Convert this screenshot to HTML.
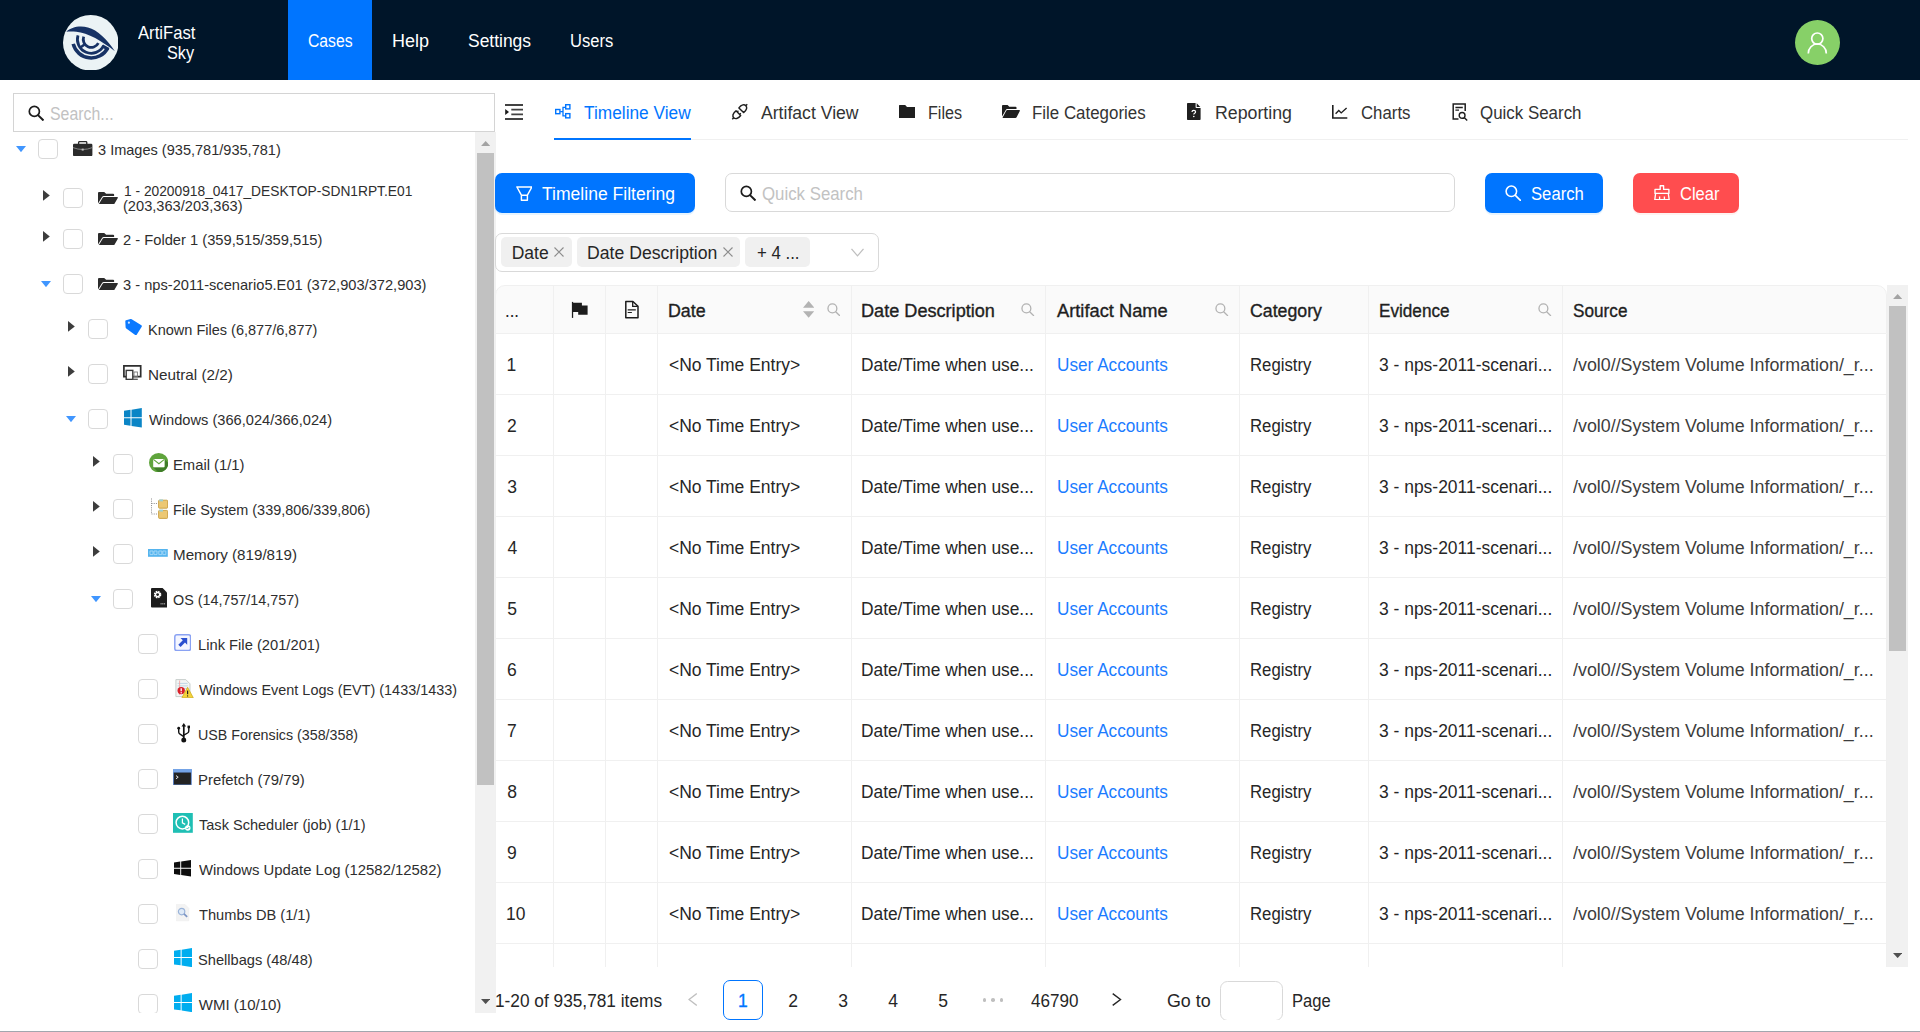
<!DOCTYPE html>
<html><head><meta charset="utf-8"><title>ArtiFast Sky</title>
<style>
html,body{margin:0;padding:0;background:#fff;}
body{width:1920px;height:1032px;overflow:hidden;position:relative;font-family:"Liberation Sans",sans-serif;}
.t{position:absolute;white-space:pre;line-height:normal;transform-origin:0 0;}
#root{position:absolute;left:0;top:0;width:1920px;height:1032px;overflow:hidden;}
</style></head><body><div id="root">
<div class="" style="position:absolute;left:0px;top:0px;width:1920px;height:80px;background:#001529;"></div>
<div class="" style="position:absolute;left:288px;top:0px;width:84px;height:80px;background:#0075ff;"></div>
<svg style="position:absolute;left:62.8px;top:14.6px;" width="55.5" height="55.5" viewBox="0 0 100 100" preserveAspectRatio="none">
<circle cx="50" cy="50" r="50" fill="#ebf3f5"/>
<path d="M6 30.4 C14 22 30 18.5 45 22.5 C62 27 80 44 93.5 65.4 C82 56.5 70 48 58 41.5 C46 35.5 34 31.5 24 30.4 C16 29.6 10 30 6 30.4 Z" fill="#163265"/>
<path d="M37.3 39.0 A14.5 14.5 0 0 0 63.7 50.8" fill="none" stroke="#163265" stroke-width="5"/>
<path d="M27.0 36.7 A25 25 0 0 0 73.2 55.3" fill="none" stroke="#163265" stroke-width="5"/>
<path d="M18.4 52.1 A33.5 33.5 0 0 0 80.7 59.2" fill="none" stroke="#163265" stroke-width="6.4"/>
<path d="M40.5 51.8 L30.1 59.6" stroke="#163265" stroke-width="4.5"/>
<path d="M70.8 55.5 L82.1 62.0" stroke="#163265" stroke-width="5.5"/>
</svg>
<span class="t " style="left:138.27px;top:22.81px;font-size:17.8px;color:#fff;transform:scaleX(0.9369);">ArtiFast</span>
<span class="t " style="left:167.47px;top:42.81px;font-size:17.8px;color:#fff;transform:scaleX(0.9155);">Sky</span>
<span class="t " style="left:308.21px;top:30.78px;font-size:17.5px;color:#fff;transform:scaleX(0.8983);">Cases</span>
<span class="t " style="left:391.92px;top:30.78px;font-size:17.5px;color:#fff;transform:scaleX(1.0282);">Help</span>
<span class="t " style="left:467.92px;top:30.78px;font-size:17.5px;color:#fff;transform:scaleX(0.9966);">Settings</span>
<span class="t " style="left:570.03px;top:30.78px;font-size:17.5px;color:#fff;transform:scaleX(0.9448);">Users</span>
<svg style="position:absolute;left:1795px;top:20px;" width="45" height="45" viewBox="0 0 45 45" preserveAspectRatio="none">
<circle cx="22.5" cy="22.5" r="22.5" fill="#87d068"/>
<circle cx="22.3" cy="18.6" r="5.6" fill="none" stroke="#fff" stroke-width="1.7"/>
<path d="M13.3 33.4 A9 9.4 0 0 1 31.3 33.4" fill="none" stroke="#fff" stroke-width="1.7"/>
</svg>
<div class="" style="position:absolute;left:13px;top:93px;width:480px;height:37px;border:1px solid #d4d4d4;background:#fff;"></div>
<svg style="position:absolute;left:27.5px;top:104.5px;" width="16" height="16" viewBox="0 0 16 16" preserveAspectRatio="none"><circle cx="6.35" cy="6.4" r="5.05" fill="none" stroke="#1c1c1c" stroke-width="1.7"/><path d="M10 10.1 L15.5 15.5" stroke="#1c1c1c" stroke-width="2" stroke-linecap="butt"/></svg>
<span class="t " style="left:50.09px;top:103.88px;font-size:17.5px;color:#c2c2c2;transform:scaleX(0.9075);">Search...</span>
<div class="" style="position:absolute;left:475px;top:132px;width:21px;height:881px;background:#f1f1f1;"></div>
<div class="" style="position:absolute;left:477px;top:153px;width:17px;height:632px;background:#c1c1c1;"></div>
<svg style="position:absolute;left:480.9px;top:140.9px;" width="9.3" height="5.1" viewBox="0 0 11 6" preserveAspectRatio="none"><path d="M0 6 L5.5 0 L11 6 Z" fill="#a3a3a3"/></svg>
<svg style="position:absolute;left:480.9px;top:999px;" width="9.3" height="5.1" viewBox="0 0 11 6" preserveAspectRatio="none"><path d="M0 0 L5.5 6 L11 0 Z" fill="#505050"/></svg>
<div style="position:absolute;left:0;top:132px;width:475px;height:881px;overflow:hidden;"><div style="position:absolute;left:0;top:-132px;">
<svg style="position:absolute;left:15.899999999999999px;top:146.2px;" width="10" height="6.2" viewBox="0 0 10 6.2" preserveAspectRatio="none"><path d="M0 0 L10 0 L5 6.2 Z" fill="#4096ff"/></svg>
<div class="" style="position:absolute;left:38px;top:139px;width:18px;height:18px;border:1px solid #d9d9d9;border-radius:4px;background:#fff;"></div>
<span class="t " style="left:98.35px;top:141.28px;font-size:15.0px;color:#2e2e2e;transform:scaleX(0.9696);">3 Images (935,781/935,781)</span>
<svg style="position:absolute;left:42.900000000000006px;top:190.1px;" width="6.8" height="10.8" viewBox="0 0 6.8 10.8" preserveAspectRatio="none"><path d="M0 0 L6.8 5.4 L0 10.8 Z" fill="#3d3d3d"/></svg>
<div class="" style="position:absolute;left:63px;top:188px;width:18px;height:18px;border:1px solid #d9d9d9;border-radius:4px;background:#fff;"></div>
<span class="t " style="left:123.85px;top:182.38px;font-size:15.0px;color:#2e2e2e;transform:scaleX(0.9180);">1 - 20200918_0417_DESKTOP-SDN1RPT.E01</span>
<span class="t " style="left:122.59px;top:197.28px;font-size:15.0px;color:#2e2e2e;transform:scaleX(0.9749);">(203,363/203,363)</span>
<svg style="position:absolute;left:42.900000000000006px;top:231.1px;" width="6.8" height="10.8" viewBox="0 0 6.8 10.8" preserveAspectRatio="none"><path d="M0 0 L6.8 5.4 L0 10.8 Z" fill="#3d3d3d"/></svg>
<div class="" style="position:absolute;left:63px;top:229px;width:18px;height:18px;border:1px solid #d9d9d9;border-radius:4px;background:#fff;"></div>
<span class="t " style="left:122.96px;top:231.28px;font-size:15.0px;color:#2e2e2e;transform:scaleX(0.9802);">2 - Folder 1 (359,515/359,515)</span>
<svg style="position:absolute;left:40.900000000000006px;top:281.2px;" width="10" height="6.2" viewBox="0 0 10 6.2" preserveAspectRatio="none"><path d="M0 0 L10 0 L5 6.2 Z" fill="#4096ff"/></svg>
<div class="" style="position:absolute;left:63px;top:274px;width:18px;height:18px;border:1px solid #d9d9d9;border-radius:4px;background:#fff;"></div>
<span class="t " style="left:123.14px;top:276.29px;font-size:15.0px;color:#2e2e2e;transform:scaleX(0.9765);">3 - nps-2011-scenario5.E01 (372,903/372,903)</span>
<svg style="position:absolute;left:67.9px;top:321.1px;" width="6.8" height="10.8" viewBox="0 0 6.8 10.8" preserveAspectRatio="none"><path d="M0 0 L6.8 5.4 L0 10.8 Z" fill="#3d3d3d"/></svg>
<div class="" style="position:absolute;left:88px;top:319px;width:18px;height:18px;border:1px solid #d9d9d9;border-radius:4px;background:#fff;"></div>
<span class="t " style="left:147.71px;top:321.29px;font-size:15.0px;color:#2e2e2e;transform:scaleX(0.9674);">Known Files (6,877/6,877)</span>
<svg style="position:absolute;left:67.9px;top:366.1px;" width="6.8" height="10.8" viewBox="0 0 6.8 10.8" preserveAspectRatio="none"><path d="M0 0 L6.8 5.4 L0 10.8 Z" fill="#3d3d3d"/></svg>
<div class="" style="position:absolute;left:88px;top:364px;width:18px;height:18px;border:1px solid #d9d9d9;border-radius:4px;background:#fff;"></div>
<span class="t " style="left:147.65px;top:366.29px;font-size:15.0px;color:#2e2e2e;transform:scaleX(1.0183);">Neutral (2/2)</span>
<svg style="position:absolute;left:65.9px;top:416.2px;" width="10" height="6.2" viewBox="0 0 10 6.2" preserveAspectRatio="none"><path d="M0 0 L10 0 L5 6.2 Z" fill="#4096ff"/></svg>
<div class="" style="position:absolute;left:88px;top:409px;width:18px;height:18px;border:1px solid #d9d9d9;border-radius:4px;background:#fff;"></div>
<span class="t " style="left:148.84px;top:411.29px;font-size:15.0px;color:#2e2e2e;transform:scaleX(0.9757);">Windows (366,024/366,024)</span>
<svg style="position:absolute;left:92.9px;top:456.1px;" width="6.8" height="10.8" viewBox="0 0 6.8 10.8" preserveAspectRatio="none"><path d="M0 0 L6.8 5.4 L0 10.8 Z" fill="#3d3d3d"/></svg>
<div class="" style="position:absolute;left:113px;top:454px;width:18px;height:18px;border:1px solid #d9d9d9;border-radius:4px;background:#fff;"></div>
<span class="t " style="left:172.69px;top:456.29px;font-size:15.0px;color:#2e2e2e;transform:scaleX(0.9863);">Email (1/1)</span>
<svg style="position:absolute;left:92.9px;top:501.1px;" width="6.8" height="10.8" viewBox="0 0 6.8 10.8" preserveAspectRatio="none"><path d="M0 0 L6.8 5.4 L0 10.8 Z" fill="#3d3d3d"/></svg>
<div class="" style="position:absolute;left:113px;top:499px;width:18px;height:18px;border:1px solid #d9d9d9;border-radius:4px;background:#fff;"></div>
<span class="t " style="left:172.72px;top:501.29px;font-size:15.0px;color:#2e2e2e;transform:scaleX(0.9613);">File System (339,806/339,806)</span>
<svg style="position:absolute;left:92.9px;top:546.1px;" width="6.8" height="10.8" viewBox="0 0 6.8 10.8" preserveAspectRatio="none"><path d="M0 0 L6.8 5.4 L0 10.8 Z" fill="#3d3d3d"/></svg>
<div class="" style="position:absolute;left:113px;top:544px;width:18px;height:18px;border:1px solid #d9d9d9;border-radius:4px;background:#fff;"></div>
<span class="t " style="left:172.66px;top:546.28px;font-size:15.0px;color:#2e2e2e;transform:scaleX(1.0117);">Memory (819/819)</span>
<svg style="position:absolute;left:90.9px;top:596.2px;" width="10" height="6.2" viewBox="0 0 10 6.2" preserveAspectRatio="none"><path d="M0 0 L10 0 L5 6.2 Z" fill="#4096ff"/></svg>
<div class="" style="position:absolute;left:113px;top:589px;width:18px;height:18px;border:1px solid #d9d9d9;border-radius:4px;background:#fff;"></div>
<span class="t " style="left:173.23px;top:591.28px;font-size:15.0px;color:#2e2e2e;transform:scaleX(0.9560);">OS (14,757/14,757)</span>
<div class="" style="position:absolute;left:138px;top:634px;width:18px;height:18px;border:1px solid #d9d9d9;border-radius:4px;background:#fff;"></div>
<span class="t " style="left:197.69px;top:636.28px;font-size:15.0px;color:#2e2e2e;transform:scaleX(0.9814);">Link File (201/201)</span>
<div class="" style="position:absolute;left:138px;top:679px;width:18px;height:18px;border:1px solid #d9d9d9;border-radius:4px;background:#fff;"></div>
<span class="t " style="left:198.84px;top:681.28px;font-size:15.0px;color:#2e2e2e;transform:scaleX(0.9612);">Windows Event Logs (EVT) (1433/1433)</span>
<div class="" style="position:absolute;left:138px;top:724px;width:18px;height:18px;border:1px solid #d9d9d9;border-radius:4px;background:#fff;"></div>
<span class="t " style="left:197.80px;top:726.28px;font-size:15.0px;color:#2e2e2e;transform:scaleX(0.9506);">USB Forensics (358/358)</span>
<div class="" style="position:absolute;left:138px;top:769px;width:18px;height:18px;border:1px solid #d9d9d9;border-radius:4px;background:#fff;"></div>
<span class="t " style="left:197.68px;top:771.28px;font-size:15.0px;color:#2e2e2e;transform:scaleX(0.9925);">Prefetch (79/79)</span>
<div class="" style="position:absolute;left:138px;top:814px;width:18px;height:18px;border:1px solid #d9d9d9;border-radius:4px;background:#fff;"></div>
<span class="t " style="left:198.58px;top:816.28px;font-size:15.0px;color:#2e2e2e;transform:scaleX(0.9696);">Task Scheduler (job) (1/1)</span>
<div class="" style="position:absolute;left:138px;top:859px;width:18px;height:18px;border:1px solid #d9d9d9;border-radius:4px;background:#fff;"></div>
<span class="t " style="left:198.84px;top:861.28px;font-size:15.0px;color:#2e2e2e;transform:scaleX(0.9920);">Windows Update Log (12582/12582)</span>
<div class="" style="position:absolute;left:138px;top:904px;width:18px;height:18px;border:1px solid #d9d9d9;border-radius:4px;background:#fff;"></div>
<span class="t " style="left:198.58px;top:906.28px;font-size:15.0px;color:#2e2e2e;transform:scaleX(0.9749);">Thumbs DB (1/1)</span>
<div class="" style="position:absolute;left:138px;top:949px;width:18px;height:18px;border:1px solid #d9d9d9;border-radius:4px;background:#fff;"></div>
<span class="t " style="left:198.24px;top:951.28px;font-size:15.0px;color:#2e2e2e;transform:scaleX(0.9753);">Shellbags (48/48)</span>
<div class="" style="position:absolute;left:138px;top:994px;width:18px;height:18px;border:1px solid #d9d9d9;border-radius:4px;background:#fff;"></div>
<span class="t " style="left:198.84px;top:996.28px;font-size:15.0px;color:#2e2e2e;">WMI (10/10)</span>
<svg style="position:absolute;left:73.2px;top:140.6px;" width="19.4" height="15.2" viewBox="0 0 19.4 15.2" preserveAspectRatio="none">
<path d="M5.6 3 V1.6 Q5.6 0.6 6.6 0.6 H12.8 Q13.8 0.6 13.8 1.6 V3" fill="none" stroke="#2b2b2b" stroke-width="1.3"/>
<rect x="0" y="2.7" width="19.4" height="12.5" rx="1.2" fill="#2b2b2b"/>
<path d="M0 6.6 Q9.7 10.4 19.4 6.6" fill="none" stroke="#9a9a9a" stroke-width="0.8"/>
<rect x="8.7" y="7.6" width="2" height="2" fill="#bdbdbd"/></svg>
<svg style="position:absolute;left:98px;top:191.6px;" width="20" height="12.8" viewBox="0 0 18 13" preserveAspectRatio="none">
<path d="M0.9 0 H5.6 L7.3 1.7 H13.6 Q14.5 1.7 14.5 2.6 V4 H5.2 Q4.2 4 3.8 4.9 L0 11.6 V0.9 Q0 0 0.9 0 Z" fill="#2b2b2b"/>
<path d="M5.3 5.1 H17.3 Q18.3 5.1 17.8 6 L14.6 12.3 Q14.2 13 13.4 13 H1.2 Q0.3 13 0.8 12.2 L4.2 5.8 Q4.6 5.1 5.3 5.1 Z" fill="#2b2b2b"/></svg>
<svg style="position:absolute;left:98px;top:232.6px;" width="20" height="12.8" viewBox="0 0 18 13" preserveAspectRatio="none">
<path d="M0.9 0 H5.6 L7.3 1.7 H13.6 Q14.5 1.7 14.5 2.6 V4 H5.2 Q4.2 4 3.8 4.9 L0 11.6 V0.9 Q0 0 0.9 0 Z" fill="#2b2b2b"/>
<path d="M5.3 5.1 H17.3 Q18.3 5.1 17.8 6 L14.6 12.3 Q14.2 13 13.4 13 H1.2 Q0.3 13 0.8 12.2 L4.2 5.8 Q4.6 5.1 5.3 5.1 Z" fill="#2b2b2b"/></svg>
<svg style="position:absolute;left:98px;top:277.6px;" width="20" height="12.8" viewBox="0 0 18 13" preserveAspectRatio="none">
<path d="M0.9 0 H5.6 L7.3 1.7 H13.6 Q14.5 1.7 14.5 2.6 V4 H5.2 Q4.2 4 3.8 4.9 L0 11.6 V0.9 Q0 0 0.9 0 Z" fill="#2b2b2b"/>
<path d="M5.3 5.1 H17.3 Q18.3 5.1 17.8 6 L14.6 12.3 Q14.2 13 13.4 13 H1.2 Q0.3 13 0.8 12.2 L4.2 5.8 Q4.6 5.1 5.3 5.1 Z" fill="#2b2b2b"/></svg>
<svg style="position:absolute;left:125px;top:319px;" width="17.2" height="16.4" viewBox="0 0 17.2 16.4" preserveAspectRatio="none">
<path d="M0.3 2.3 Q0.2 1.4 1.1 1.2 L5.6 0.1 Q6.4 -0.1 7.1 0.4 L16.4 6.2 Q17.3 6.8 16.7 7.7 L11.7 15.7 Q11.1 16.6 10.2 16 L1.3 9.4 Q0.7 9 0.6 8.2 Z" fill="#0b79ff"/>
<circle cx="3.9" cy="3.7" r="1.1" fill="#cfe4ff"/></svg>
<svg style="position:absolute;left:123.4px;top:365px;" width="18.6" height="15.2" viewBox="0 0 18.6 15.2" preserveAspectRatio="none">
<path d="M3 11.6 H0.9 V0.9 H17.7 V11.6 H10" fill="none" stroke="#2e2e2e" stroke-width="1.7"/>
<rect x="3.2" y="5.4" width="6.6" height="9" fill="#fff" stroke="#3a3a3a" stroke-width="1.4"/>
<path d="M9.5 14.3 H14.8" stroke="#555" stroke-width="1.3"/>
<rect x="11" y="7" width="3.4" height="4.6" fill="none" stroke="#777" stroke-width="0.9"/></svg>
<svg style="position:absolute;left:123.9px;top:408.2px;" width="17.8" height="19.6" viewBox="0 0 18 20" preserveAspectRatio="none">
<path d="M0 2.9 L6.6 1.9 V9.5 H0 Z" fill="#0a85c6"/>
<path d="M7.6 1.75 L18 0 V9.5 H7.6 Z" fill="#0a85c6"/>
<path d="M0 10.5 H6.6 V18.1 L0 17.1 Z" fill="#0a85c6"/>
<path d="M7.6 10.5 H18 V20 L7.6 18.25 Z" fill="#0a85c6"/></svg>
<svg style="position:absolute;left:148.8px;top:453.1px;" width="19.4" height="19.4" viewBox="0 0 19.4 19.4" preserveAspectRatio="none">
<defs><clipPath id="ec"><circle cx="9.7" cy="9.7" r="9.7"/></clipPath></defs>
<circle cx="9.7" cy="9.7" r="9.7" fill="#5fa43c"/>
<g clip-path="url(#ec)"><path d="M4.5 14.6 L15.6 14.6 L15.6 6.4 L24 14 L14 24 Z" fill="#3f7d29"/></g>
<rect x="4.2" y="6" width="11.4" height="8.2" rx="0.8" fill="#fff"/>
<path d="M4.4 6.4 L9.9 10.8 L15.4 6.4" fill="none" stroke="#5fa43c" stroke-width="1.1"/></svg>
<svg style="position:absolute;left:149.5px;top:497.5px;" width="18.5" height="21" viewBox="0 0 18.5 21" preserveAspectRatio="none">
<path d="M1.5 0.5 V16 M1.5 5.5 H7.5 M1.5 16 H7.5" fill="none" stroke="#8a8a8a" stroke-width="1" stroke-dasharray="1 1.2"/>
<rect x="8.6" y="2.2" width="9" height="8" rx="0.8" fill="#ecc873" stroke="#c79d3f" stroke-width="0.9"/>
<rect x="9.4" y="1.4" width="3.6" height="2" fill="#9fd0cf"/>
<rect x="8.6" y="12.4" width="9" height="8" rx="0.8" fill="#ecc873" stroke="#c79d3f" stroke-width="0.9"/>
<rect x="9.4" y="11.6" width="3.6" height="2" fill="#9fd0cf"/></svg>
<svg style="position:absolute;left:148.2px;top:549.2px;" width="19.8" height="7.8" viewBox="0 0 19.8 7.8" preserveAspectRatio="none">
<rect x="0" y="0" width="19.8" height="7.8" fill="#55b4ee"/>
<path d="M2 2 H5 V5.6 H2 Z M6 2 H9 V5.6 H6 Z M10.8 2 H13.8 V5.6 H10.8 Z M14.8 2 H17.8 V5.6 H14.8 Z" fill="none" stroke="#a7daf8" stroke-width="0.9"/></svg>
<svg style="position:absolute;left:150.6px;top:588.2px;" width="16.4" height="19.6" viewBox="0 0 16.4 19.6" preserveAspectRatio="none">
<path d="M1 0 H11.6 L16.4 4.8 V18.6 Q16.4 19.6 15.4 19.6 H1 Q0 19.6 0 18.6 V1 Q0 0 1 0 Z" fill="#1c1c1c"/>
<circle cx="6.6" cy="6.6" r="2.7" fill="none" stroke="#fff" stroke-width="2.1" stroke-dasharray="1.45 0.68"/>
<circle cx="6.6" cy="6.6" r="2.1" fill="none" stroke="#fff" stroke-width="1.3"/>
<path d="M9.5 15.8 H14.5" stroke="#8a8a8a" stroke-width="1.6" stroke-dasharray="1.2 0.5"/></svg>
<svg style="position:absolute;left:173.7px;top:633.6px;" width="17.4" height="17.4" viewBox="0 0 17.4 17.4" preserveAspectRatio="none">
<rect x="0.8" y="0.8" width="15.8" height="15.8" rx="2.2" fill="#f4f6ff" stroke="#8aa2f3" stroke-width="1.5"/>
<path d="M6.5 4 H13.2 V10.7 L11 8.5 L6.6 13 L4.3 10.7 L8.8 6.3 Z" fill="#2b50cf"/></svg>
<svg style="position:absolute;left:175px;top:678.8px;" width="18.6" height="19.4" viewBox="0 0 18.6 19.4" preserveAspectRatio="none">
<path d="M0.9 0.6 H10.8 L15 4.8 V17.6 H0.9 Z" fill="#f3f5f4" stroke="#c3cbc7" stroke-width="0.9"/>
<path d="M2.6 4.4 H12.6 M2.6 6.9 H13 M2.6 9.4 H13" stroke="#b9d3e4" stroke-width="0.9"/>
<path d="M4.6 1.5 V16" stroke="#f0a8a8" stroke-width="0.9"/>
<circle cx="6.2" cy="11.6" r="3.7" fill="#d9202a"/>
<path d="M6.2 9.2 V12.2" stroke="#fff" stroke-width="1.3"/><circle cx="6.2" cy="13.8" r="0.7" fill="#fff"/>
<path d="M12.6 8.3 L18.3 18.7 H6.9 Z" fill="#f5d33a" stroke="#c9a717" stroke-width="0.7" stroke-linejoin="round"/>
<path d="M12.6 11.6 V15.2" stroke="#222" stroke-width="1.2"/><circle cx="12.6" cy="16.9" r="0.65" fill="#222"/></svg>
<svg style="position:absolute;left:176.6px;top:723.1px;" width="13.6" height="20" viewBox="0 0 13.6 20" preserveAspectRatio="none">
<path d="M6.8 2.2 V16" stroke="#111" stroke-width="1.7"/>
<path d="M6.8 0 L9.1 3.6 H4.5 Z" fill="#111"/>
<circle cx="6.8" cy="17.1" r="2.5" fill="#111"/>
<path d="M1.7 5.6 V9 Q1.7 10.4 3 11.2 L6.8 13.6" fill="none" stroke="#111" stroke-width="1.4"/>
<path d="M11.8 4.6 V8 Q11.8 9.2 10.6 10 L6.8 12.2" fill="none" stroke="#111" stroke-width="1.4"/>
<circle cx="1.7" cy="5.2" r="1.4" fill="#111"/>
<rect x="10.5" y="2.6" width="2.6" height="2.6" fill="#111"/></svg>
<svg style="position:absolute;left:173.2px;top:769px;" width="18.8" height="16.4" viewBox="0 0 18.8 16.4" preserveAspectRatio="none">
<rect x="0" y="0" width="18.8" height="16.4" rx="0.8" fill="#5f86c9"/>
<rect x="0" y="0" width="18.8" height="3.4" fill="#74a3e6"/>
<rect x="0.9" y="3.6" width="17" height="11.9" fill="#232323"/>
<path d="M3 6.6 L5.2 8.2 L3 9.8" fill="none" stroke="#fff" stroke-width="0.9"/></svg>
<svg style="position:absolute;left:173.2px;top:813.2px;" width="19.8" height="19.8" viewBox="0 0 19.8 19.8" preserveAspectRatio="none">
<rect x="0" y="0" width="19.8" height="19.8" fill="#1fbfb4"/>
<circle cx="9.4" cy="9.6" r="6.3" fill="none" stroke="#fff" stroke-width="1.5"/>
<path d="M9.4 5.6 V9.9 L12.2 11.4" fill="none" stroke="#fff" stroke-width="1.2"/>
<circle cx="14.8" cy="15" r="2.7" fill="#fff"/><path d="M13.5 15 L14.5 16 L16.1 14.1" fill="none" stroke="#1fbfb4" stroke-width="0.9"/></svg>
<svg style="position:absolute;left:173.9px;top:860.3px;" width="17" height="16.5" viewBox="0 0 18 20" preserveAspectRatio="none">
<path d="M0 2.9 L6.6 1.9 V9.5 H0 Z" fill="#0d0d0d"/>
<path d="M7.6 1.75 L18 0 V9.5 H7.6 Z" fill="#0d0d0d"/>
<path d="M0 10.5 H6.6 V18.1 L0 17.1 Z" fill="#0d0d0d"/>
<path d="M7.6 10.5 H18 V20 L7.6 18.25 Z" fill="#0d0d0d"/></svg>
<svg style="position:absolute;left:176.4px;top:904.4px;" width="13.2" height="17.2" viewBox="0 0 13.2 17.2" preserveAspectRatio="none">
<path d="M0.4 0.4 H9 L12.8 4.2 V16.8 H0.4 Z" fill="#f3f3f3" stroke="#ececec" stroke-width="0.6"/>
<circle cx="5.6" cy="7.6" r="3.2" fill="#dfeaf7" stroke="#9bb4d9" stroke-width="1.2"/>
<path d="M8 10 L11.2 13" stroke="#7d95c4" stroke-width="1.7"/></svg>
<svg style="position:absolute;left:173.9px;top:948.2px;" width="18.1" height="19.2" viewBox="0 0 18 20" preserveAspectRatio="none">
<path d="M0 2.9 L6.6 1.9 V9.5 H0 Z" fill="#00adef"/>
<path d="M7.6 1.75 L18 0 V9.5 H7.6 Z" fill="#00adef"/>
<path d="M0 10.5 H6.6 V18.1 L0 17.1 Z" fill="#00adef"/>
<path d="M7.6 10.5 H18 V20 L7.6 18.25 Z" fill="#00adef"/></svg>
<svg style="position:absolute;left:173.9px;top:993.2px;" width="18.1" height="19.2" viewBox="0 0 18 20" preserveAspectRatio="none">
<path d="M0 2.9 L6.6 1.9 V9.5 H0 Z" fill="#00adef"/>
<path d="M7.6 1.75 L18 0 V9.5 H7.6 Z" fill="#00adef"/>
<path d="M0 10.5 H6.6 V18.1 L0 17.1 Z" fill="#00adef"/>
<path d="M7.6 10.5 H18 V20 L7.6 18.25 Z" fill="#00adef"/></svg>
</div></div>
<div class="" style="position:absolute;left:554px;top:139px;width:1354px;height:1px;background:#f0f0f0;"></div>
<div class="" style="position:absolute;left:554px;top:138px;width:137px;height:2px;background:#0075ff;"></div>
<span class="t " style="left:584.02px;top:102.88px;font-size:17.5px;color:#0075ff;transform:scaleX(0.9886);">Timeline View</span>
<span class="t " style="left:760.96px;top:102.88px;font-size:17.5px;color:#333333;transform:scaleX(1.0067);">Artifact View</span>
<span class="t " style="left:928.28px;top:102.88px;font-size:17.5px;color:#333333;transform:scaleX(0.9232);">Files</span>
<span class="t " style="left:1031.81px;top:102.88px;font-size:17.5px;color:#333333;transform:scaleX(0.9652);">File Categories</span>
<span class="t " style="left:1214.94px;top:102.88px;font-size:17.5px;color:#333333;transform:scaleX(1.0147);">Reporting</span>
<span class="t " style="left:1361.36px;top:102.88px;font-size:17.5px;color:#333333;transform:scaleX(0.9594);">Charts</span>
<span class="t " style="left:1480.21px;top:102.88px;font-size:17.5px;color:#333333;transform:scaleX(0.9661);">Quick Search</span>
<svg style="position:absolute;left:505px;top:104px;" width="18" height="16" viewBox="0 0 18 16" preserveAspectRatio="none">
<path d="M0 1 H18 M6.3 5.6 H18 M6.3 10.4 H18 M0 15 H18" stroke="#424242" stroke-width="1.9"/>
<path d="M0.2 5.1 L4 8 L0.2 10.9 Z" fill="#1a1a1a"/></svg>
<svg style="position:absolute;left:555px;top:104.3px;" width="15.6" height="14.6" viewBox="0 0 15.6 14.6" preserveAspectRatio="none">
<rect x="0.7" y="5.5" width="4.2" height="4.2" fill="none" stroke="#0075ff" stroke-width="1.4"/>
<rect x="10.7" y="0.7" width="4.2" height="4.2" fill="none" stroke="#0075ff" stroke-width="1.4"/>
<rect x="10.7" y="9.65" width="4.2" height="4.2" fill="none" stroke="#0075ff" stroke-width="1.4"/>
<path d="M5.2 7.6 H8 M10.4 3.3 H8 V11.9 H10.4" fill="none" stroke="#0075ff" stroke-width="1.3"/></svg>
<svg style="position:absolute;left:730.85px;top:102.85px;" width="17.5" height="17.5" viewBox="0 0 17.5 17.5" preserveAspectRatio="none">
<g transform="translate(8.75 8.75) rotate(-45)" fill="none" stroke="#1f1f1f" stroke-width="1.45">
<path d="M-10.6 0 H-8.4"/><path d="M10.6 0 H8.4"/>
<path d="M-2 -3.3 C-6.4 -4 -8.5 -2 -8.5 0 C-8.5 2 -6.4 4 -2 3.3 Z" stroke-linejoin="round"/>
<path d="M2.1 -3.3 C6.5 -4 8.6 -2 8.6 0 C8.6 2 6.5 4 2.1 3.3 Z" stroke-linejoin="round"/>
<path d="M-2 -1.7 H-0.2 M-2 1.7 H-0.2" stroke-width="1.3"/>
</g></svg>
<svg style="position:absolute;left:898.8px;top:105px;" width="16.2" height="13.4" viewBox="0 0 16.2 13.4" preserveAspectRatio="none"><path d="M0.6 0 H6.2 L8 1.9 H15.6 Q16.2 1.9 16.2 2.5 V12.8 Q16.2 13.4 15.6 13.4 H0.6 Q0 13.4 0 12.8 V0.6 Q0 0 0.6 0 Z" fill="#1f1f1f"/></svg>
<svg style="position:absolute;left:1001.7px;top:105.3px;" width="18" height="13" viewBox="0 0 18 13" preserveAspectRatio="none">
<path d="M0.9 0 H5.6 L7.3 1.7 H13.6 Q14.5 1.7 14.5 2.6 V4 H5.2 Q4.2 4 3.8 4.9 L0 11.6 V0.9 Q0 0 0.9 0 Z" fill="#1f1f1f"/>
<path d="M5.3 5.1 H17.3 Q18.3 5.1 17.8 6 L14.6 12.3 Q14.2 13 13.4 13 H1.2 Q0.3 13 0.8 12.2 L4.2 5.8 Q4.6 5.1 5.3 5.1 Z" fill="#1f1f1f"/></svg>
<svg style="position:absolute;left:1187.2px;top:103.3px;" width="13.6" height="17" viewBox="0 0 13.6 17" preserveAspectRatio="none">
<path d="M0.8 0 H8.6 V4.2 Q8.6 5 9.4 5 H13.6 V16.2 Q13.6 17 12.8 17 H0.8 Q0 17 0 16.2 V0.8 Q0 0 0.8 0 Z" fill="#1f1f1f"/>
<path d="M9.7 0.3 L13.3 3.9 H9.7 Z" fill="#1f1f1f"/>
<path d="M5 9 Q5 7.3 6.8 7.3 Q8.6 7.3 8.6 8.8 Q8.6 9.8 7.6 10.3 Q6.8 10.7 6.8 11.6" fill="none" stroke="#fff" stroke-width="1.2"/>
<circle cx="6.8" cy="13.5" r="0.8" fill="#fff"/></svg>
<svg style="position:absolute;left:1332px;top:105px;" width="15.5" height="14" viewBox="0 0 15.5 14" preserveAspectRatio="none">
<path d="M0.8 0 V13 H15.3" fill="none" stroke="#1f1f1f" stroke-width="1.6"/>
<path d="M3.6 8.8 L6.8 5.6 L9.2 7.9 L14.6 3" fill="none" stroke="#1f1f1f" stroke-width="1.4"/></svg>
<svg style="position:absolute;left:1452px;top:103px;" width="16" height="17.5" viewBox="0 0 16 17.5" preserveAspectRatio="none">
<path d="M6.5 16 H1.2 V1 H13.2 V8" fill="none" stroke="#1f1f1f" stroke-width="1.5"/>
<path d="M3.4 4.5 H10.8 M3.4 7.1 H7" stroke="#1f1f1f" stroke-width="1.3"/>
<circle cx="10.1" cy="12.4" r="2.9" fill="none" stroke="#1f1f1f" stroke-width="1.4"/>
<path d="M12.2 14.6 L15.2 17.4" stroke="#1f1f1f" stroke-width="1.4"/></svg>
<div class="" style="position:absolute;left:495px;top:173px;width:200px;height:40px;background:#0075ff;border-radius:7px;box-shadow:0 2px 0 rgba(5,145,255,0.1);"></div>
<span class="t " style="left:542.31px;top:183.88px;font-size:17.5px;color:#fff;transform:scaleX(1.0032);">Timeline Filtering</span>
<div class="" style="position:absolute;left:725px;top:173px;width:728px;height:37px;border:1px solid #d9d9d9;border-radius:7px;background:#fff;"></div>
<svg style="position:absolute;left:739.5px;top:184.5px;" width="16" height="16" viewBox="0 0 16 16" preserveAspectRatio="none"><circle cx="6.35" cy="6.4" r="5.05" fill="none" stroke="#1c1c1c" stroke-width="1.7"/><path d="M10 10.1 L15.5 15.5" stroke="#1c1c1c" stroke-width="2" stroke-linecap="butt"/></svg>
<span class="t " style="left:762.01px;top:183.88px;font-size:17.5px;color:#c2c2c2;transform:scaleX(0.9613);">Quick Search</span>
<div class="" style="position:absolute;left:1485px;top:173px;width:118px;height:40px;background:#0075ff;border-radius:7px;box-shadow:0 2px 0 rgba(5,145,255,0.1);"></div>
<span class="t " style="left:1531.35px;top:183.88px;font-size:17.5px;color:#fff;transform:scaleX(0.9527);">Search</span>
<div class="" style="position:absolute;left:1633px;top:173px;width:106px;height:40px;background:#ff4d4f;border-radius:7px;box-shadow:0 2px 0 rgba(255,38,5,0.06);"></div>
<span class="t " style="left:1679.97px;top:183.88px;font-size:17.5px;color:#fff;transform:scaleX(0.9442);">Clear</span>
<svg style="position:absolute;left:515.5px;top:185.5px;" width="16.8" height="15" viewBox="0 0 16.8 15" preserveAspectRatio="none"><path d="M0.9 1 H15.9 L11.4 9.2 V14.2 H5.4 V9.2 Z M5.4 9.2 H11.4" fill="none" stroke="#fff" stroke-width="1.45" stroke-linejoin="round"/></svg>
<svg style="position:absolute;left:1504.5px;top:184.5px;" width="16.8" height="16.8" viewBox="0 0 16.8 16.8" preserveAspectRatio="none"><circle cx="6.35" cy="6.35" r="5.25" fill="none" stroke="#fff" stroke-width="1.55"/><path d="M10.1 10.1 L16 16" stroke="#fff" stroke-width="1.6"/></svg>
<svg style="position:absolute;left:1653.8px;top:184.8px;" width="16" height="15.6" viewBox="0 0 16 15.6" preserveAspectRatio="none"><path d="M6.2 4.4 V0.8 H9.6 V4.4 H14.9 V8.4 H1 V4.4 Z" fill="none" stroke="#fff" stroke-width="1.35" stroke-linejoin="round"/><path d="M1.6 8.4 L0.8 14.8 H15.2 L14.3 8.4" fill="none" stroke="#fff" stroke-width="1.35" stroke-linejoin="round"/><path d="M5.6 14.8 V11.4 M10.4 14.8 V11.4" stroke="#fff" stroke-width="1.35"/></svg>
<div class="" style="position:absolute;left:495px;top:233px;width:382px;height:37px;border:1px solid #d9d9d9;border-radius:7px;background:#fff;"></div>
<div class="" style="position:absolute;left:501px;top:237px;width:71px;height:30px;background:#f0f0f0;border-radius:5px;"></div>
<div class="" style="position:absolute;left:577px;top:237px;width:163px;height:30px;background:#f0f0f0;border-radius:5px;"></div>
<div class="" style="position:absolute;left:745px;top:237px;width:65px;height:30px;background:#f0f0f0;border-radius:5px;"></div>
<span class="t " style="left:511.67px;top:242.58px;font-size:17.5px;color:#262626;">Date</span>
<span class="t " style="left:587.25px;top:242.58px;font-size:17.5px;color:#262626;transform:scaleX(1.0078);">Date Description</span>
<span class="t " style="left:757.09px;top:242.58px;font-size:17.5px;color:#262626;transform:scaleX(0.9611);">+ 4 ...</span>
<svg style="position:absolute;left:554.4px;top:247.2px;" width="10" height="10" viewBox="0 0 10 10" preserveAspectRatio="none"><path d="M0.5 0.5 L9.5 9.5 M9.5 0.5 L0.5 9.5" stroke="#8c8c8c" stroke-width="1.1"/></svg>
<svg style="position:absolute;left:723.3px;top:247.2px;" width="10" height="10" viewBox="0 0 10 10" preserveAspectRatio="none"><path d="M0.5 0.5 L9.5 9.5 M9.5 0.5 L0.5 9.5" stroke="#8c8c8c" stroke-width="1.1"/></svg>
<svg style="position:absolute;left:851px;top:248px;" width="13" height="9" viewBox="0 0 13 9" preserveAspectRatio="none"><path d="M0.5 0.8 L6.5 7.8 L12.5 0.8" fill="none" stroke="#bfbfbf" stroke-width="1.3"/></svg>
<div style="position:absolute;left:495px;top:285px;width:1392px;height:682px;overflow:hidden;">
<div style="position:absolute;left:-495px;top:-285px;width:1920px;height:1100px;">
<div class="" style="position:absolute;left:495px;top:285px;width:1392px;height:49px;background:#fafafa;border-radius:10px 10px 0 0;border:1px solid #f0f0f0;box-sizing:border-box;"></div>
<div class="" style="position:absolute;left:1886px;top:334px;width:1px;height:640px;background:#f0f0f0;"></div>
<div class="" style="position:absolute;left:495px;top:334px;width:1px;height:640px;background:#f0f0f0;"></div>
<div class="" style="position:absolute;left:553px;top:286px;width:1px;height:720px;background:#f0f0f0;"></div>
<div class="" style="position:absolute;left:605px;top:286px;width:1px;height:720px;background:#f0f0f0;"></div>
<div class="" style="position:absolute;left:657px;top:286px;width:1px;height:720px;background:#f0f0f0;"></div>
<div class="" style="position:absolute;left:851px;top:286px;width:1px;height:720px;background:#f0f0f0;"></div>
<div class="" style="position:absolute;left:1045px;top:286px;width:1px;height:720px;background:#f0f0f0;"></div>
<div class="" style="position:absolute;left:1239px;top:286px;width:1px;height:720px;background:#f0f0f0;"></div>
<div class="" style="position:absolute;left:1368px;top:286px;width:1px;height:720px;background:#f0f0f0;"></div>
<div class="" style="position:absolute;left:1562px;top:286px;width:1px;height:720px;background:#f0f0f0;"></div>
<div class="" style="position:absolute;left:495px;top:394px;width:1392px;height:1px;background:#f0f0f0;"></div>
<div class="" style="position:absolute;left:495px;top:455px;width:1392px;height:1px;background:#f0f0f0;"></div>
<div class="" style="position:absolute;left:495px;top:516px;width:1392px;height:1px;background:#f0f0f0;"></div>
<div class="" style="position:absolute;left:495px;top:577px;width:1392px;height:1px;background:#f0f0f0;"></div>
<div class="" style="position:absolute;left:495px;top:638px;width:1392px;height:1px;background:#f0f0f0;"></div>
<div class="" style="position:absolute;left:495px;top:699px;width:1392px;height:1px;background:#f0f0f0;"></div>
<div class="" style="position:absolute;left:495px;top:760px;width:1392px;height:1px;background:#f0f0f0;"></div>
<div class="" style="position:absolute;left:495px;top:821px;width:1392px;height:1px;background:#f0f0f0;"></div>
<div class="" style="position:absolute;left:495px;top:882px;width:1392px;height:1px;background:#f0f0f0;"></div>
<div class="" style="position:absolute;left:495px;top:943px;width:1392px;height:1px;background:#f0f0f0;"></div>
<div class="" style="position:absolute;left:495px;top:1004px;width:1392px;height:1px;background:#f0f0f0;"></div>
<div class="" style="position:absolute;left:495px;top:1065px;width:1392px;height:1px;background:#f0f0f0;"></div>
<span class="t " style="left:505.38px;top:300.88px;font-size:17.5px;color:#1f1f1f;transform:scaleX(0.9553);-webkit-text-stroke:0.1px #1f1f1f;">...</span>
<span class="t " style="left:667.54px;top:300.88px;font-size:17.5px;color:#1f1f1f;transform:scaleX(1.0186);-webkit-text-stroke:0.35px #1f1f1f;">Date</span>
<span class="t " style="left:861.21px;top:300.88px;font-size:17.5px;color:#1f1f1f;transform:scaleX(1.0354);-webkit-text-stroke:0.35px #1f1f1f;">Date Description</span>
<span class="t " style="left:1056.86px;top:300.88px;font-size:17.5px;color:#1f1f1f;transform:scaleX(1.0448);-webkit-text-stroke:0.35px #1f1f1f;">Artifact Name</span>
<span class="t " style="left:1249.91px;top:300.88px;font-size:17.5px;color:#1f1f1f;transform:scaleX(1.0128);-webkit-text-stroke:0.35px #1f1f1f;">Category</span>
<span class="t " style="left:1378.79px;top:300.88px;font-size:17.5px;color:#1f1f1f;transform:scaleX(0.9801);-webkit-text-stroke:0.35px #1f1f1f;">Evidence</span>
<span class="t " style="left:1573.13px;top:300.88px;font-size:17.5px;color:#1f1f1f;transform:scaleX(0.9818);-webkit-text-stroke:0.35px #1f1f1f;">Source</span>
<svg style="position:absolute;left:826.9px;top:302.5px;" width="13.5" height="13.5" viewBox="0 0 14 14" preserveAspectRatio="none"><circle cx="5.6" cy="5.6" r="4.6" fill="none" stroke="#b2b2b2" stroke-width="1.35"/><path d="M9 9 L13.4 13.4" stroke="#b2b2b2" stroke-width="1.35"/></svg>
<svg style="position:absolute;left:1021.2px;top:302.5px;" width="13.5" height="13.5" viewBox="0 0 14 14" preserveAspectRatio="none"><circle cx="5.6" cy="5.6" r="4.6" fill="none" stroke="#b2b2b2" stroke-width="1.35"/><path d="M9 9 L13.4 13.4" stroke="#b2b2b2" stroke-width="1.35"/></svg>
<svg style="position:absolute;left:1215px;top:302.5px;" width="13.5" height="13.5" viewBox="0 0 14 14" preserveAspectRatio="none"><circle cx="5.6" cy="5.6" r="4.6" fill="none" stroke="#b2b2b2" stroke-width="1.35"/><path d="M9 9 L13.4 13.4" stroke="#b2b2b2" stroke-width="1.35"/></svg>
<svg style="position:absolute;left:1538px;top:302.5px;" width="13.5" height="13.5" viewBox="0 0 14 14" preserveAspectRatio="none"><circle cx="5.6" cy="5.6" r="4.6" fill="none" stroke="#b2b2b2" stroke-width="1.35"/><path d="M9 9 L13.4 13.4" stroke="#b2b2b2" stroke-width="1.35"/></svg>
<svg style="position:absolute;left:802.9px;top:301px;" width="11.3" height="16.8" viewBox="0 0 11.3 16.8" preserveAspectRatio="none"><path d="M0 6.7 L5.65 0 L11.3 6.7 Z M0 10.2 L5.65 16.8 L11.3 10.2 Z" fill="#b3b3b3"/></svg>
<svg style="position:absolute;left:571px;top:301px;" width="17" height="17.5" viewBox="0 0 17 17.5" preserveAspectRatio="none"><rect x="0.9" y="0.9" width="1.25" height="16" fill="#1c1c1c"/><path d="M2 1.8 H10.9 V4.6 H16.6 V13.7 H7.2 V10.9 H2 Z" fill="#1c1c1c"/></svg>
<svg style="position:absolute;left:624px;top:300px;" width="16" height="19.5" viewBox="0 0 16 19.5" preserveAspectRatio="none"><path d="M1.8 1.5 H8.9 L14 6.3 V17.7 H1.8 Z" fill="none" stroke="#1c1c1c" stroke-width="1.5" stroke-linejoin="round"/><path d="M8.7 1.6 V6.4 H13.8" fill="none" stroke="#1c1c1c" stroke-width="1.3"/><path d="M3.7 9.9 H11.8 M3.7 12.5 H7.9" stroke="#1c1c1c" stroke-width="1.2"/></svg>
<span class="t " style="left:506.57px;top:355.08px;font-size:17.5px;color:#262626;">1</span>
<span class="t " style="left:668.94px;top:355.08px;font-size:17.5px;color:#262626;">&lt;No Time Entry&gt;</span>
<span class="t " style="left:861.28px;top:355.08px;font-size:17.5px;color:#262626;transform:scaleX(0.9907);">Date/Time when use...</span>
<span class="t " style="left:1056.58px;top:355.08px;font-size:17.5px;color:#1c7cff;transform:scaleX(0.9825);">User Accounts</span>
<span class="t " style="left:1249.63px;top:355.08px;font-size:17.5px;color:#262626;transform:scaleX(0.9566);">Registry</span>
<span class="t " style="left:1378.94px;top:355.08px;font-size:17.5px;color:#262626;transform:scaleX(0.9969);">3 - nps-2011-scenari...</span>
<span class="t " style="left:1573.00px;top:355.08px;font-size:17.5px;color:#3d3d3d;transform:scaleX(1.0200);">/vol0//System Volume Information/_r...</span>
<span class="t " style="left:507.02px;top:416.08px;font-size:17.5px;color:#262626;">2</span>
<span class="t " style="left:668.94px;top:416.08px;font-size:17.5px;color:#262626;">&lt;No Time Entry&gt;</span>
<span class="t " style="left:861.28px;top:416.08px;font-size:17.5px;color:#262626;transform:scaleX(0.9907);">Date/Time when use...</span>
<span class="t " style="left:1056.58px;top:416.08px;font-size:17.5px;color:#1c7cff;transform:scaleX(0.9825);">User Accounts</span>
<span class="t " style="left:1249.63px;top:416.08px;font-size:17.5px;color:#262626;transform:scaleX(0.9566);">Registry</span>
<span class="t " style="left:1378.94px;top:416.08px;font-size:17.5px;color:#262626;transform:scaleX(0.9969);">3 - nps-2011-scenari...</span>
<span class="t " style="left:1573.00px;top:416.08px;font-size:17.5px;color:#3d3d3d;transform:scaleX(1.0200);">/vol0//System Volume Information/_r...</span>
<span class="t " style="left:507.23px;top:477.08px;font-size:17.5px;color:#262626;">3</span>
<span class="t " style="left:668.94px;top:477.08px;font-size:17.5px;color:#262626;">&lt;No Time Entry&gt;</span>
<span class="t " style="left:861.28px;top:477.08px;font-size:17.5px;color:#262626;transform:scaleX(0.9907);">Date/Time when use...</span>
<span class="t " style="left:1056.58px;top:477.08px;font-size:17.5px;color:#1c7cff;transform:scaleX(0.9825);">User Accounts</span>
<span class="t " style="left:1249.63px;top:477.08px;font-size:17.5px;color:#262626;transform:scaleX(0.9566);">Registry</span>
<span class="t " style="left:1378.94px;top:477.08px;font-size:17.5px;color:#262626;transform:scaleX(0.9969);">3 - nps-2011-scenari...</span>
<span class="t " style="left:1573.00px;top:477.08px;font-size:17.5px;color:#3d3d3d;transform:scaleX(1.0200);">/vol0//System Volume Information/_r...</span>
<span class="t " style="left:507.51px;top:538.08px;font-size:17.5px;color:#262626;">4</span>
<span class="t " style="left:668.94px;top:538.08px;font-size:17.5px;color:#262626;">&lt;No Time Entry&gt;</span>
<span class="t " style="left:861.28px;top:538.08px;font-size:17.5px;color:#262626;transform:scaleX(0.9907);">Date/Time when use...</span>
<span class="t " style="left:1056.58px;top:538.08px;font-size:17.5px;color:#1c7cff;transform:scaleX(0.9825);">User Accounts</span>
<span class="t " style="left:1249.63px;top:538.08px;font-size:17.5px;color:#262626;transform:scaleX(0.9566);">Registry</span>
<span class="t " style="left:1378.94px;top:538.08px;font-size:17.5px;color:#262626;transform:scaleX(0.9969);">3 - nps-2011-scenari...</span>
<span class="t " style="left:1573.00px;top:538.08px;font-size:17.5px;color:#3d3d3d;transform:scaleX(1.0200);">/vol0//System Volume Information/_r...</span>
<span class="t " style="left:507.20px;top:599.08px;font-size:17.5px;color:#262626;">5</span>
<span class="t " style="left:668.94px;top:599.08px;font-size:17.5px;color:#262626;">&lt;No Time Entry&gt;</span>
<span class="t " style="left:861.28px;top:599.08px;font-size:17.5px;color:#262626;transform:scaleX(0.9907);">Date/Time when use...</span>
<span class="t " style="left:1056.58px;top:599.08px;font-size:17.5px;color:#1c7cff;transform:scaleX(0.9825);">User Accounts</span>
<span class="t " style="left:1249.63px;top:599.08px;font-size:17.5px;color:#262626;transform:scaleX(0.9566);">Registry</span>
<span class="t " style="left:1378.94px;top:599.08px;font-size:17.5px;color:#262626;transform:scaleX(0.9969);">3 - nps-2011-scenari...</span>
<span class="t " style="left:1573.00px;top:599.08px;font-size:17.5px;color:#3d3d3d;transform:scaleX(1.0200);">/vol0//System Volume Information/_r...</span>
<span class="t " style="left:507.02px;top:660.08px;font-size:17.5px;color:#262626;">6</span>
<span class="t " style="left:668.94px;top:660.08px;font-size:17.5px;color:#262626;">&lt;No Time Entry&gt;</span>
<span class="t " style="left:861.28px;top:660.08px;font-size:17.5px;color:#262626;transform:scaleX(0.9907);">Date/Time when use...</span>
<span class="t " style="left:1056.58px;top:660.08px;font-size:17.5px;color:#1c7cff;transform:scaleX(0.9825);">User Accounts</span>
<span class="t " style="left:1249.63px;top:660.08px;font-size:17.5px;color:#262626;transform:scaleX(0.9566);">Registry</span>
<span class="t " style="left:1378.94px;top:660.08px;font-size:17.5px;color:#262626;transform:scaleX(0.9969);">3 - nps-2011-scenari...</span>
<span class="t " style="left:1573.00px;top:660.08px;font-size:17.5px;color:#3d3d3d;transform:scaleX(1.0200);">/vol0//System Volume Information/_r...</span>
<span class="t " style="left:507.01px;top:721.08px;font-size:17.5px;color:#262626;">7</span>
<span class="t " style="left:668.94px;top:721.08px;font-size:17.5px;color:#262626;">&lt;No Time Entry&gt;</span>
<span class="t " style="left:861.28px;top:721.08px;font-size:17.5px;color:#262626;transform:scaleX(0.9907);">Date/Time when use...</span>
<span class="t " style="left:1056.58px;top:721.08px;font-size:17.5px;color:#1c7cff;transform:scaleX(0.9825);">User Accounts</span>
<span class="t " style="left:1249.63px;top:721.08px;font-size:17.5px;color:#262626;transform:scaleX(0.9566);">Registry</span>
<span class="t " style="left:1378.94px;top:721.08px;font-size:17.5px;color:#262626;transform:scaleX(0.9969);">3 - nps-2011-scenari...</span>
<span class="t " style="left:1573.00px;top:721.08px;font-size:17.5px;color:#3d3d3d;transform:scaleX(1.0200);">/vol0//System Volume Information/_r...</span>
<span class="t " style="left:507.15px;top:782.08px;font-size:17.5px;color:#262626;">8</span>
<span class="t " style="left:668.94px;top:782.08px;font-size:17.5px;color:#262626;">&lt;No Time Entry&gt;</span>
<span class="t " style="left:861.28px;top:782.08px;font-size:17.5px;color:#262626;transform:scaleX(0.9907);">Date/Time when use...</span>
<span class="t " style="left:1056.58px;top:782.08px;font-size:17.5px;color:#1c7cff;transform:scaleX(0.9825);">User Accounts</span>
<span class="t " style="left:1249.63px;top:782.08px;font-size:17.5px;color:#262626;transform:scaleX(0.9566);">Registry</span>
<span class="t " style="left:1378.94px;top:782.08px;font-size:17.5px;color:#262626;transform:scaleX(0.9969);">3 - nps-2011-scenari...</span>
<span class="t " style="left:1573.00px;top:782.08px;font-size:17.5px;color:#3d3d3d;transform:scaleX(1.0200);">/vol0//System Volume Information/_r...</span>
<span class="t " style="left:507.09px;top:843.08px;font-size:17.5px;color:#262626;">9</span>
<span class="t " style="left:668.94px;top:843.08px;font-size:17.5px;color:#262626;">&lt;No Time Entry&gt;</span>
<span class="t " style="left:861.28px;top:843.08px;font-size:17.5px;color:#262626;transform:scaleX(0.9907);">Date/Time when use...</span>
<span class="t " style="left:1056.58px;top:843.08px;font-size:17.5px;color:#1c7cff;transform:scaleX(0.9825);">User Accounts</span>
<span class="t " style="left:1249.63px;top:843.08px;font-size:17.5px;color:#262626;transform:scaleX(0.9566);">Registry</span>
<span class="t " style="left:1378.94px;top:843.08px;font-size:17.5px;color:#262626;transform:scaleX(0.9969);">3 - nps-2011-scenari...</span>
<span class="t " style="left:1573.00px;top:843.08px;font-size:17.5px;color:#3d3d3d;transform:scaleX(1.0200);">/vol0//System Volume Information/_r...</span>
<span class="t " style="left:506.07px;top:904.08px;font-size:17.5px;color:#262626;transform:scaleX(0.9963);">10</span>
<span class="t " style="left:668.94px;top:904.08px;font-size:17.5px;color:#262626;">&lt;No Time Entry&gt;</span>
<span class="t " style="left:861.28px;top:904.08px;font-size:17.5px;color:#262626;transform:scaleX(0.9907);">Date/Time when use...</span>
<span class="t " style="left:1056.58px;top:904.08px;font-size:17.5px;color:#1c7cff;transform:scaleX(0.9825);">User Accounts</span>
<span class="t " style="left:1249.63px;top:904.08px;font-size:17.5px;color:#262626;transform:scaleX(0.9566);">Registry</span>
<span class="t " style="left:1378.94px;top:904.08px;font-size:17.5px;color:#262626;transform:scaleX(0.9969);">3 - nps-2011-scenari...</span>
<span class="t " style="left:1573.00px;top:904.08px;font-size:17.5px;color:#3d3d3d;transform:scaleX(1.0200);">/vol0//System Volume Information/_r...</span>
</div></div>
<div class="" style="position:absolute;left:1887px;top:285px;width:21px;height:682px;background:#f1f1f1;"></div>
<div class="" style="position:absolute;left:1889px;top:306px;width:17px;height:345px;background:#c1c1c1;"></div>
<svg style="position:absolute;left:1892.9px;top:293.8px;" width="9.3" height="5.1" viewBox="0 0 10 5.5" preserveAspectRatio="none"><path d="M0 5.5 L5 0 L10 5.5 Z" fill="#a3a3a3"/></svg>
<svg style="position:absolute;left:1892.9px;top:952.9px;" width="9.3" height="5.1" viewBox="0 0 10 5.5" preserveAspectRatio="none"><path d="M0 0 L5 5.5 L10 0 Z" fill="#505050"/></svg>
<span class="t " style="left:495.39px;top:990.78px;font-size:17.5px;color:#262626;transform:scaleX(0.9867);">1-20 of 935,781 items</span>
<svg style="position:absolute;left:687.5px;top:992.7px;" width="9.5" height="13" viewBox="0 0 9.5 13" preserveAspectRatio="none"><path d="M8.8 0.6 L1 6.5 L8.8 12.4" fill="none" stroke="#bfbfbf" stroke-width="1.4"/></svg>
<div class="" style="position:absolute;left:723px;top:980px;width:38px;height:38px;border:1px solid #0075ff;border-radius:7px;background:#fff;"></div>
<span class="t " style="left:737.89px;top:990.78px;font-size:17.5px;color:#0075ff;-webkit-text-stroke:0.3px #0075ff;">1</span>
<span class="t " style="left:788.13px;top:990.78px;font-size:17.5px;color:#262626;">2</span>
<span class="t " style="left:838.18px;top:990.78px;font-size:17.5px;color:#262626;">3</span>
<span class="t " style="left:888.20px;top:990.78px;font-size:17.5px;color:#262626;">4</span>
<span class="t " style="left:938.14px;top:990.78px;font-size:17.5px;color:#262626;">5</span>
<div class="" style="position:absolute;left:982.7px;top:998.1px;width:3.6px;height:3.6px;background:#bfbfbf;border-radius:50%;"></div>
<div class="" style="position:absolute;left:991.2px;top:998.1px;width:3.6px;height:3.6px;background:#bfbfbf;border-radius:50%;"></div>
<div class="" style="position:absolute;left:999.7px;top:998.1px;width:3.6px;height:3.6px;background:#bfbfbf;border-radius:50%;"></div>
<span class="t " style="left:1031.22px;top:990.78px;font-size:17.5px;color:#262626;transform:scaleX(0.9744);">46790</span>
<svg style="position:absolute;left:1112px;top:992.7px;" width="9.5" height="13" viewBox="0 0 9.5 13" preserveAspectRatio="none"><path d="M0.7 0.6 L8.5 6.5 L0.7 12.4" fill="none" stroke="#262626" stroke-width="1.4"/></svg>
<span class="t " style="left:1166.61px;top:990.78px;font-size:17.5px;color:#262626;transform:scaleX(1.0191);">Go to</span>
<div style="position:absolute;left:1219px;top:979px;width:66px;height:41.2px;overflow:hidden;">
<div class="" style="position:absolute;left:1px;top:2px;width:61px;height:38px;border:1px solid #d9d9d9;border-radius:7.5px;background:#fff;"></div>
</div>
<span class="t " style="left:1291.84px;top:990.78px;font-size:17.5px;color:#262626;transform:scaleX(0.9468);">Page</span>
<div class="" style="position:absolute;left:0px;top:1031px;width:1920px;height:1px;background:#a2a6ae;"></div>
</div></body></html>
